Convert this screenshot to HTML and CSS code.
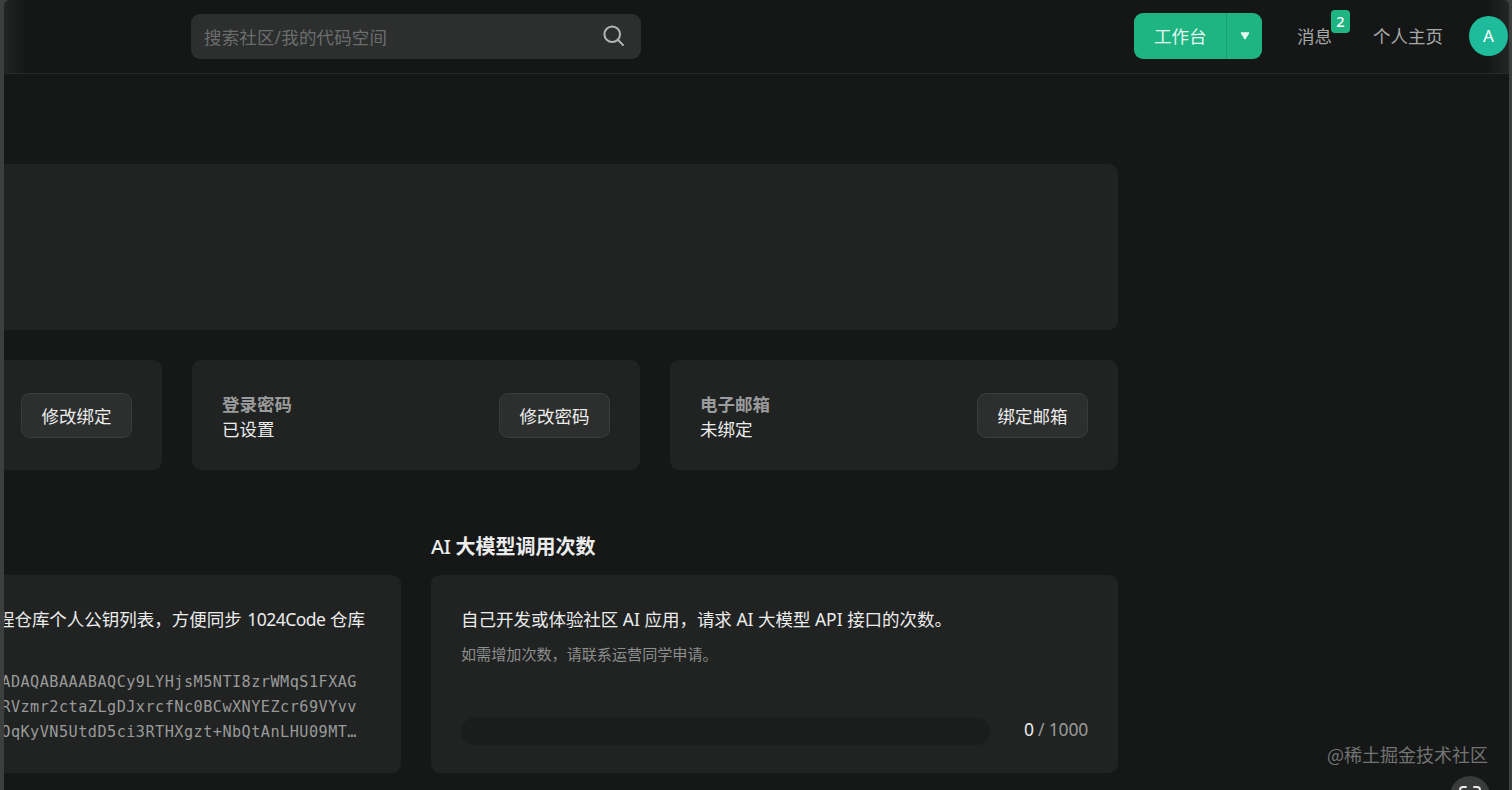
FILE: index.html
```html
<!DOCTYPE html>
<html lang="zh-CN">
<head>
  <meta charset="UTF-8" />
  <title>1024Code - 个人设置</title>
  <link rel="stylesheet" href="styles.css">
</head>
<body>
  <div class="window">

    <header class="navbar">
      <div class="search">
        <span class="search-text">搜索社区/我的代码空间</span>
        <svg class="search-icon" viewBox="0 0 22 22" fill="none" stroke="#b4b5b5" stroke-width="2">
          <circle cx="9.2" cy="9.2" r="7.8" />
          <path d="M14.8 14.8 L20.6 20.6" />
        </svg>
      </div>
      <div class="nav-right">
        <div class="workbench">
          <span class="workbench-label">工作台</span>
          <span class="workbench-more">
            <svg width="10" height="8" viewBox="0 0 10 8"><path d="M1 .8h8L5 7.2z" fill="#e6f7f0" stroke="#e6f7f0" stroke-linejoin="round" /></svg>
          </span>
        </div>
        <a class="nav-link message">消息<span class="badge">2</span></a>
        <a class="nav-link">个人主页</a>
        <div class="avatar">A</div>
      </div>
    </header>

    <main class="content">
      <section class="card banner"></section>

      <section class="accounts">
        <div class="card account">
          <div></div>
          <button class="btn">修改绑定</button>
        </div>
        <div class="card account">
          <div class="info">
            <div class="label">登录密码</div>
            <div>已设置</div>
          </div>
          <button class="btn">修改密码</button>
        </div>
        <div class="card account">
          <div class="info">
            <div class="label">电子邮箱</div>
            <div>未绑定</div>
          </div>
          <button class="btn">绑定邮箱</button>
        </div>
      </section>

      <section class="panels">
        <div class="card panel keys">
          <p class="desc">程仓库个人公钥列表，方便同步 <span class="latin">1024Code</span> 仓库</p>
          <div class="ssh-key">
            <div>ADAQABAAABAQCy9LYHjsM5NTI8zrWMqS1FXAG</div>
            <div>RVzmr2ctaZLgDJxrcfNc0BCwXNYEZcr69VYvv</div>
            <div>OqKyVN5UtdD5ci3RTHXgzt+NbQtAnLHU09MT…</div>
          </div>
        </div>
        <div class="usage">
          <h2 class="title"><span>AI</span> 大模型调用次数</h2>
          <div class="card panel">
            <p class="desc">自己开发或体验社区 AI 应用，请求 AI 大模型 API 接口的次数。</p>
            <p class="tip">如需增加次数，请联系运营同学申请。</p>
            <div class="quota">
              <div class="bar"></div>
              <div class="count"><b>0</b> / 1000</div>
            </div>
          </div>
        </div>
      </section>
    </main>

    <div class="watermark">@稀土掘金技术社区</div>
    <div class="float-btn">
      <svg width="22" height="20" viewBox="0 0 22 20" fill="none" stroke="#e8e8e8" stroke-width="2" stroke-linecap="round">
        <path d="M1 5V4a3 3 0 0 1 3-3h3M15 1h3a3 3 0 0 1 3 3v1M21 15v1a3 3 0 0 1-3 3h-3M7 19H4a3 3 0 0 1-3-3v-1" />
      </svg>
    </div>
  </div>
</body>
</html>
```

FILE: styles.css
```css
* {
  box-sizing: border-box;
  margin: 0;
  padding: 0;
}
body {
  background: #3d3e3e;
  color: #ececec;
  font-family: "Noto Sans", "Noto Sans CJK SC", sans-serif;
  font-size: 17.5px;
  line-height: 25px;
}
.window {
  position: relative;
  height: 790px;
  margin: 0 3px 0 4px;
  background: #161818;
  border-radius: 6px 6px 0 0;
  overflow: hidden;
}

/* Navbar */
.navbar {
  display: flex;
  justify-content: space-between;
  align-items: flex-start;
  height: 74px;
  padding: 13px 1px 0 187px;
  border-bottom: 1px solid #282a2a;
  background: linear-gradient(90deg, #232424, #151717 22px, #151717 1483px, #242626);
}
.search {
  display: flex;
  justify-content: space-between;
  align-items: center;
  width: 450px;
  height: 45px;
  margin-top: 1px;
  padding: 2px 16px 0 13px;
  border-radius: 9px;
  background: #2d2f2f;
  color: #6b6d6d;
}
.search-text {
  letter-spacing: 0.15px;
}
.search-icon {
  width: 22px;
  height: 22px;
  margin-top: -3px;
}
.nav-right {
  display: flex;
  align-items: flex-start;
}
.workbench {
  display: flex;
  width: 128px;
  height: 46px;
  margin-right: 35px;
  border-radius: 9px;
  background: #1fb583;
  color: #e6f7f0;
}
.workbench-label {
  width: 93px;
  padding: 11px 0 0 20px;
  border-right: 1px solid #1aa074;
}
.workbench-more {
  display: flex;
  flex: 1;
  align-items: center;
  justify-content: center;
}
.nav-link {
  margin: 11px 26px 0 0;
  color: #a7a8a8;
}
.message {
  position: relative;
  margin-right: 41px;
}
.badge {
  position: absolute;
  top: -14px;
  left: 34px;
  width: 19px;
  height: 23px;
  border-radius: 4px;
  background: #1fb583;
  color: #fff;
  font-size: 14.5px;
  font-weight: 500;
  line-height: 23px;
  text-align: center;
}
.avatar {
  width: 39px;
  height: 40px;
  margin-top: 3px;
  border-radius: 50%;
  background: #1fbc9c;
  color: #fff;
  font-size: 17px;
  line-height: 40px;
  text-align: center;
}

/* Page content, scrolled to the right */
.content {
  width: 1404px;
  margin-left: -290px;
  padding-top: 90px;
}
.card {
  border-radius: 9px;
  background: #212322;
}
.banner {
  height: 166px;
}
.accounts {
  display: grid;
  grid-template-columns: repeat(3, 1fr);
  gap: 30px;
  margin-top: 30px;
}
.account {
  display: flex;
  justify-content: space-between;
  align-items: center;
  height: 110px;
  padding: 0 30px;
}
.info {
  padding-top: 3px;
}
.label {
  color: #9a9b9c;
  font-weight: 700;
}
.btn {
  width: 111px;
  height: 45px;
  padding-top: 2px;
  border: 1px solid #3b3d3d;
  border-radius: 9px;
  background: #2d2f2e;
  color: #ececec;
  font: inherit;
}

/* Lower panels */
.panels {
  display: grid;
  grid-template-columns: 1fr 1fr;
  gap: 30px;
  align-items: end;
  margin-top: 62px;
}
.title {
  height: 43px;
  font-size: 20px;
  line-height: 30px;
}
.title span {
  font-weight: 500;
  letter-spacing: -0.4px;
}
.panel {
  height: 198px;
  padding: 32px 30px 0;
}
.keys {
  display: flex;
  flex-direction: column;
  align-items: flex-end;
  padding-right: 36px;
}
.desc {
  white-space: nowrap;
  letter-spacing: -0.02px;
}
.latin {
  margin-left: 1px;
  letter-spacing: -0.5px;
}
.ssh-key {
  margin: 38px 8px 0 0;
  color: #999a9a;
  font-family: "DejaVu Sans Mono", monospace;
  font-size: 15.2px;
  letter-spacing: 0.47px;
  white-space: nowrap;
}
.tip {
  margin-top: 10px;
  color: #8d8e8e;
  font-size: 15.1px;
}
.quota {
  display: flex;
  justify-content: space-between;
  margin-top: 51px;
}
.bar {
  width: 529px;
  height: 27px;
  border-radius: 14px;
  background: #1b1d1c;
}
.count {
  margin-top: -1px;
  color: #999a9a;
  letter-spacing: -0.2px;
}
.count b {
  color: #ececec;
  font-weight: 400;
}

/* Floating items */
.watermark {
  position: absolute;
  right: 21px;
  bottom: 23px;
  color: #727373;
  font-family: "Noto Sans CJK SC", sans-serif;
  font-size: 18px;
}
.float-btn {
  position: absolute;
  right: 19px;
  bottom: -26px;
  display: flex;
  align-items: center;
  justify-content: center;
  width: 40px;
  height: 40px;
  border-radius: 50%;
  background: #3a3b3b;
}
```
